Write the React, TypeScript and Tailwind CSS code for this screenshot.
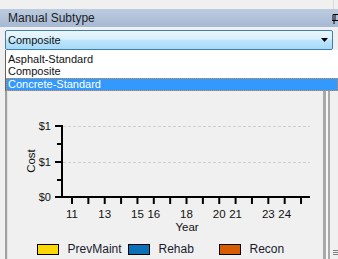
import React from 'react'

const ticks = Array.from({ length: 15 }, (_, i) => 64 + i * 16.36)
const labels: { i: number; t: string }[] = [
    { i: 0, t: '11' },
    { i: 2, t: '13' },
    { i: 4, t: '15' },
    { i: 5, t: '16' },
    { i: 7, t: '18' },
    { i: 9, t: '20' },
    { i: 10, t: '21' },
    { i: 12, t: '23' },
    { i: 13, t: '24' },
]

const legend = [
    { name: 'PrevMaint', color: 'bg-[#ffd700]' },
    { name: 'Rehab', color: 'bg-[#0a70b8]' },
    { name: 'Recon', color: 'bg-[#d95b00]' },
]

function Chart() {
    return (
        <svg width="315" height="185" className="block" style={{ fontFamily: '"Liberation Sans", Arial, sans-serif' }}>
            {/* grid */}
            <line x1="55" y1="73.5" x2="302" y2="73.5" stroke="#cfcfcf" strokeDasharray="3 2" />
            <line x1="55" y1="109.5" x2="302" y2="109.5" stroke="#cfcfcf" strokeDasharray="3 2" />

            {/* y axis */}
            <line x1="54" y1="72" x2="54" y2="145" stroke="#000" strokeWidth="2" />
            {[73, 109, 144].map((y) => (
                <line key={y} x1="47" y1={y} x2="54" y2={y} stroke="#000" strokeWidth="2" />
            ))}
            {[91, 127].map((y) => (
                <line key={y} x1="49" y1={y} x2="54" y2={y} stroke="#000" strokeWidth="2" />
            ))}
            <g fontSize="11" fill="#111" textAnchor="end">
                <text x="43" y="77">$1</text>
                <text x="43" y="113">$1</text>
                <text x="43" y="148">$0</text>
            </g>
            <text x="0" y="0" fontSize="11.5" fill="#111" textAnchor="middle" transform="translate(27 108) rotate(-90)">
                Cost
            </text>

            {/* x axis */}
            <line x1="47" y1="144" x2="302" y2="144" stroke="#000" strokeWidth="2" />
            {ticks.map((x) => (
                <line key={x} x1={x} y1="144" x2={x} y2="151" stroke="#000" strokeWidth="2" />
            ))}
            <g fontSize="11.5" fill="#111" textAnchor="middle">
                {labels.map((l) => (
                    <text key={l.t} x={ticks[l.i]} y="165">
                        {l.t}
                    </text>
                ))}
                <text x="179" y="178">Year</text>
            </g>
        </svg>
    )
}

export default function App() {
    return (
        <div
            className="relative flex h-[259px] w-[338px] flex-col overflow-hidden bg-[#f0f0f0] text-[#111]"
            style={{ fontFamily: '"Liberation Sans", Arial, sans-serif' }}
        >
            <div className="flex h-[9px] justify-end">
                <div className="mr-[4px] w-px bg-[#dadada]"></div>
            </div>

            {/* title bar */}
            <div className="flex h-[18px] items-center justify-between bg-gradient-to-b from-[#bccbe0] to-[#a6b9d3] pl-[8px]">
                <span className="text-[12px] leading-none text-[#1e1e1e]">Manual Subtype</span>
                <svg width="6" height="10" className="mt-[2px]" viewBox="0 0 6 10">
                    <path d="M1 0.5 H6 M1 0.5 V6.5 H6 M3 0.5 V6.5 M0 6.5 H6 M2 6.5 V10" stroke="#000" fill="none" />
                </svg>
            </div>

            <div className="h-[3px]"></div>

            {/* combobox */}
            <div className="mx-[5px] flex h-[20px] items-center justify-between rounded-[2px] border border-[#3c7fb1] bg-[linear-gradient(to_bottom,#eaf6fd_0%,#d9f0fc_45%,#bee6fd_50%,#a7d9f5_100%)] pl-[2px] pr-[4px]">
                <span className="text-[11px] leading-none">Composite</span>
                <svg width="7" height="4" viewBox="0 0 7 4">
                    <path d="M0 0 H7 L3.5 4 Z" fill="#000" />
                </svg>
            </div>

            {/* body */}
            <div className="flex flex-1">
                <div className="w-[5px]"></div>
                <div className="w-[3px] border-r border-[#e3e3e3] bg-[#a0a0a0]"></div>
                <div className="flex w-[315px] flex-col">
                    <div className="h-[3px] border-t-2 border-[#9a9a9a]"></div>
                    <Chart />
                    <div className="mt-[5px] flex pl-[29px]">
                        {legend.map((l) => (
                            <div key={l.name} className="flex w-[91px] items-center gap-[9px]">
                                <div className={`h-[11px] w-[22px] border border-black ${l.color}`}></div>
                                <span className="text-[12px] leading-none text-[#1a1a2e]">{l.name}</span>
                            </div>
                        ))}
                    </div>
                </div>
                <div className="w-[4px] bg-[#a9a9a9]"></div>
                <div className="w-[2px] bg-[#f7f7f7]"></div>
                <div className="w-[2px] bg-[#a9a9a9]"></div>
                <div className="flex flex-1 flex-col justify-end pb-[4px] pl-[3px]">
                    <div className="flex flex-col gap-[1px]">
                        <div className="h-px w-[5px] bg-[#808080]"></div>
                        <div className="h-px w-[5px] bg-[#808080]"></div>
                        <div className="h-px w-[5px] bg-[#808080]"></div>
                    </div>
                </div>
            </div>

            {/* open dropdown list */}
            <div className="absolute left-[5px] right-0 top-[50px] flex h-[41px] flex-col border-l border-[#646464] bg-white pt-[3px] text-[11px] leading-none">
                <div className="flex h-[12px] items-center pl-[2px]">Asphalt-Standard</div>
                <div className="flex h-[13px] items-center pl-[2px]">Composite</div>
                <div className="flex h-[13px] items-center border border-dotted border-[#e8862a] bg-[#3399ff] pl-[1px] text-white">
                    Concrete-Standard
                </div>
            </div>
        </div>
    )
}
